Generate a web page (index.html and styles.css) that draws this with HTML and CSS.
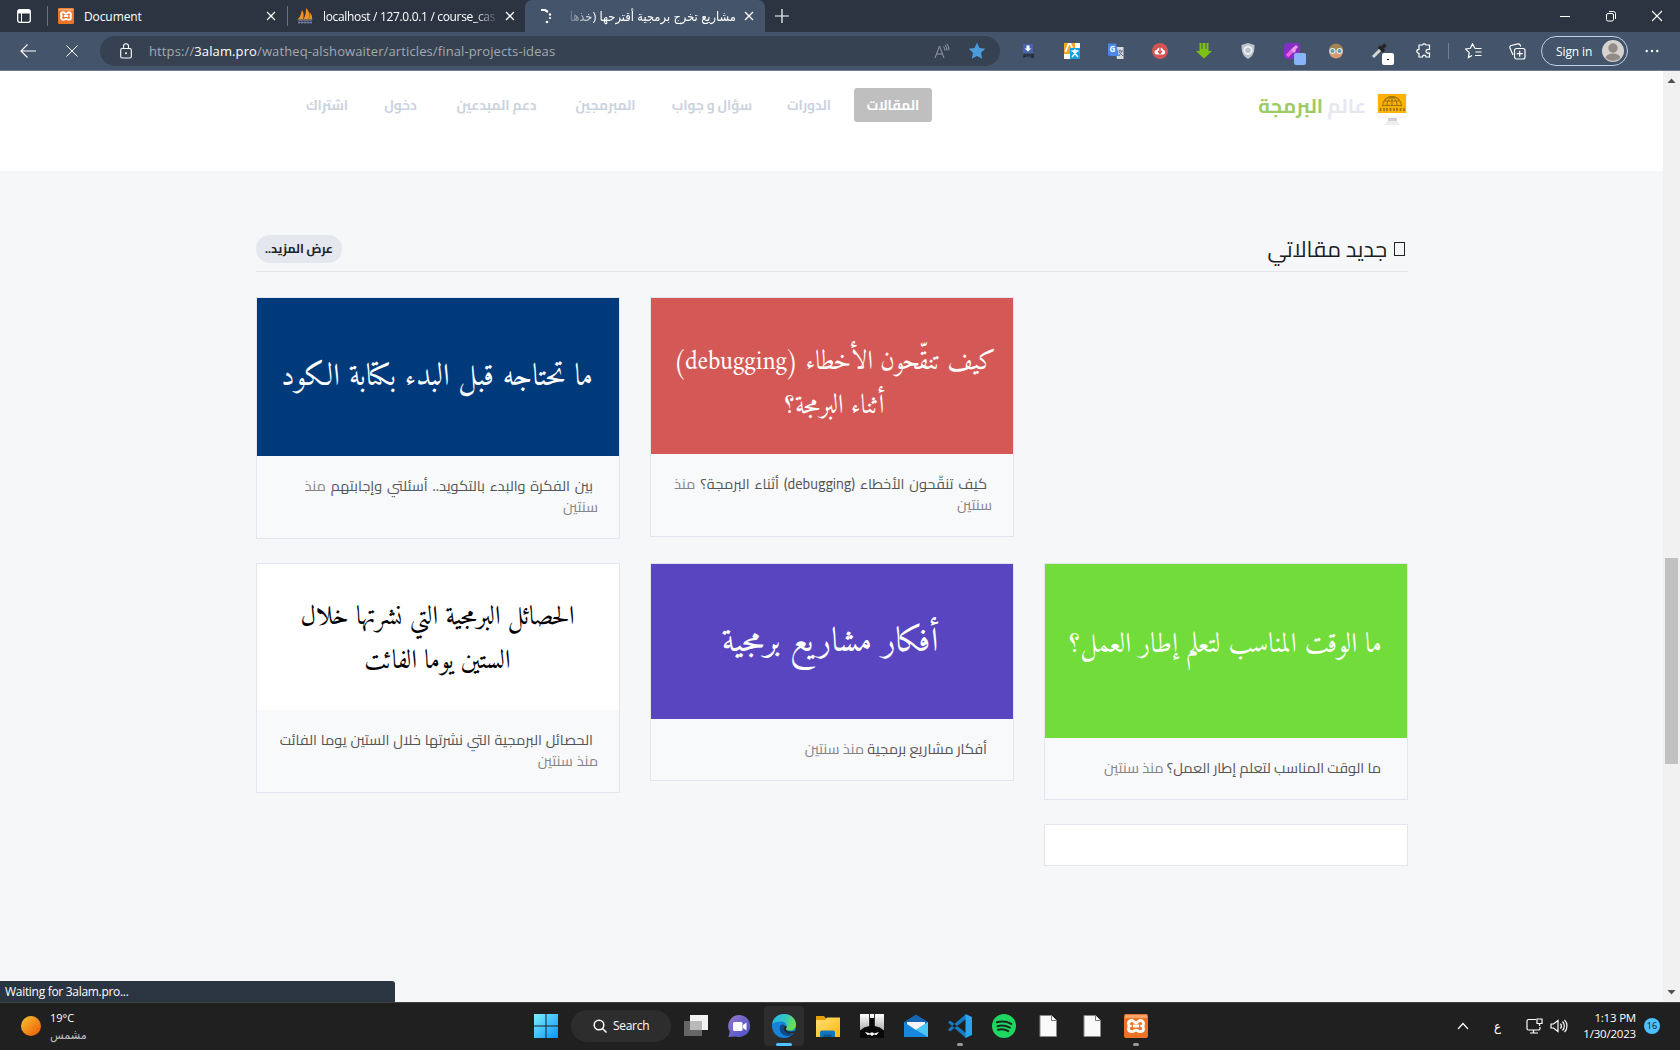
FILE: index.html
```html
<!DOCTYPE html>
<html lang="ar">
<head>
<meta charset="utf-8">
<title>مشاريع تخرج برمجية أقترحها</title>
<link rel="stylesheet" href="styles.css">
</head>
<body>
<svg class="defs" width="0" height="0">
  <defs>
    <symbol id="x" viewBox="0 0 12 12"><path d="M2 2l8 8M10 2l-8 8" stroke="#fff" stroke-width="1.3" fill="none"/></symbol>
    <symbol id="xampp" viewBox="0 0 24 24"><rect width="24" height="24" rx="2" fill="#ee7326"/><path d="M1 1h22v3H1z" fill="#f6a56d"/><path d="M8 6.500c-2.500 0-3.500 1.500-3.500 3.200 0 1.300.6 1.900 1.300 2.300-.8.500-1.300 1.200-1.300 2.400 0 2 1.500 3.200 3.500 3.200s2.600-1.300 4-1.300 2 1.300 4 1.300 3.500-1.300 3.500-3.200c0-1.200-.5-1.900-1.300-2.400.8-.4 1.300-1.100 1.300-2.300 0-1.900-1.300-3.200-3.500-3.200-2 0-1.800 2.300-4 2.300S10 6.500 8 6.500zM9 12h6" fill="none" stroke="#fff" stroke-width="2.900"/></symbol>
    <linearGradient id="gsun" x1="0" y1="0" x2="1" y2="1"><stop offset=".15" stop-color="#f4b42c"/><stop offset=".8" stop-color="#ef6c0d"/></linearGradient>
    <linearGradient id="gwin" x1="0" y1="0" x2="1" y2="1"><stop offset="0" stop-color="#7cf0ff"/><stop offset="1" stop-color="#0a93f8"/></linearGradient>
    <linearGradient id="gedge" x1="0" y1="0" x2="1" y2=".3"><stop offset="0" stop-color="#25b5e8"/><stop offset=".6" stop-color="#36c6c0"/><stop offset="1" stop-color="#6ae04c"/></linearGradient>
    <linearGradient id="gchat" x1="0" y1="0" x2="1" y2="1"><stop offset="0" stop-color="#9c79c4"/><stop offset=".5" stop-color="#6a63cc"/><stop offset="1" stop-color="#4a4fc4"/></linearGradient>
    <linearGradient id="gfold" x1="0" y1="0" x2="1" y2="1"><stop offset="0" stop-color="#ffdf74"/><stop offset="1" stop-color="#fdb90d"/></linearGradient>
    <linearGradient id="gbat" x1="0" y1="0" x2="0" y2="1"><stop offset="0" stop-color="#fff"/><stop offset="1" stop-color="#888"/></linearGradient>
  </defs>
</svg>

<div class="tabs">
  <div class="tab-menu"><svg width="14" height="14" viewBox="0 0 14 14"><rect x=".7" y=".7" width="12.600" height="12.600" rx="2" fill="none" stroke="#fff" stroke-width="1.300"/><path d="M1 1h12v3.500H1z" fill="#fff"/><path d="M4.500 4v9" stroke="#fff"/></svg></div>
  <div class="tab first"><svg width="16" height="16"><use href="#xampp"/></svg><span class="label">Document</span><svg width="12" height="12"><use href="#x"/></svg></div>
  <div class="tab second"><svg width="16" height="16" viewBox="0 0 16 16"><path d="M1 11C4 8 4 5 5 2c2 3 2 6 1 9zM6.500 11C9 7 9 4 9 0c4 4 4 8 2.500 11zM12 11c1-3 1-5 .5-7 2 2 3 5 2.500 7z" fill="#f39323"/><path d="M0 11.500h16l-2 1H2z" fill="#b7a691"/><path d="M1 14.500h14M2 13v3M5 13v3M8 13v3M11 13v3M14 13v3" stroke="#7179a0"/></svg><span class="label fade">localhost / 127.0.0.1 / course_cas</span><svg width="12" height="12"><use href="#x"/></svg></div>
  <div class="tab active"><svg width="16" height="16" viewBox="0 0 16 16"><path d="M3 2h4l3 2" fill="none" stroke="#fff" stroke-width="2.200"/><circle cx="12" cy="6.500" r="1.200" fill="#fff"/><circle cx="12" cy="10" r="1.100" fill="#fff"/><circle cx="9" cy="14" r="1.300" fill="#fff"/></svg><span class="label" dir="rtl">مشاريع تخرج برمجية أقترحها (خذها</span><svg width="12" height="12"><use href="#x"/></svg></div>
  <svg class="plus" width="14" height="14" viewBox="0 0 14 14"><path d="M7 0v14M0 7h14" stroke="#fff" stroke-width="1.200"/></svg>
  <div class="controls">
    <svg width="12" height="12" viewBox="0 0 12 12"><path d="M1 6.500h10" stroke="#fff"/></svg>
    <svg width="12" height="12" viewBox="0 0 12 12"><rect x="1.500" y="3.500" width="7" height="7.500" rx="1.500" fill="none" stroke="#fff"/><path d="M4 1.500h4.500a2 2 0 012 2V9" fill="none" stroke="#fff"/></svg>
    <svg width="12" height="12" viewBox="0 0 12 12"><path d="M1 1l10 10M11 1L1 11" stroke="#fff" stroke-width="1.100"/></svg>
  </div>
</div>

<div class="toolbar">
  <svg class="back" width="16" height="14" viewBox="0 0 16 14"><path d="M7.500.500L1 7l6.500 6.500M1 7h15" fill="none" stroke="#fff" stroke-width="1.100"/></svg>
  <svg class="stop" width="12" height="12" viewBox="0 0 12 12"><path d="M.5.500l11 11M11.500.500l-11 11" stroke="#fff"/></svg>
  <div class="address">
    <svg width="12" height="16" viewBox="0 0 12 16"><rect x=".7" y="5.500" width="10.600" height="9.500" rx="1.500" fill="none" stroke="#fff" stroke-width="1.100"/><path d="M3.500 5.500V3.300a2.500 2.500 0 015 0v2.200" fill="none" stroke="#fff" stroke-width="1.100"/><circle cx="6" cy="10.300" r="1" fill="#fff"/></svg>
    <span class="url">https://<b>3alam.pro</b>/watheq-alshowaiter/articles/final-projects-ideas</span>
    <svg width="16" height="16" viewBox="0 0 16 16"><path d="M1 15L5.500 3 10 15M2.500 11h6M9.500 3.500a5 5 0 011.500 4M11 2a7 7 0 012 5.500M12.800.800a9 9 0 012.200 6.500" fill="none" stroke="#929aa5"/></svg>
    <svg width="18" height="18" viewBox="0 0 18 18"><path d="M9 .8l2.500 5.300 5.800.7-4.300 4 1.200 5.900L9 13.900l-5.200 2.800L5 10.800l-4.300-4 5.800-.7z" fill="#4a9bda"/></svg>
  </div>
  <div class="extensions">
    <svg viewBox="0 0 16 16"><rect x="3" y="1" width="10" height="9" fill="#4464b0"/><path d="M8 8.500L4.500 5.500h2v-3h3v3h2z" fill="#fff"/><text x="3" y="14.300" font-size="6" font-weight="bold" fill="#161d29">png</text></svg>
    <svg viewBox="0 0 16 16"><path d="M0 0h16v16H0z" fill="#fff"/><path d="M0 0h11v5H6v6H0z" fill="#fba51c"/><path d="M1.500 9l3-8h2l2 5" fill="none" stroke="#fff" stroke-width="1.800"/><path d="M6 5h10v11H6z" fill="#16a1e6"/><path d="M7.500 8h7M11 6v2M9 8l5 6M13 8l-5 6" stroke="#fff" stroke-width="1.300"/></svg>
    <svg viewBox="0 0 16 16"><path d="M7 4h8.500v12H9z" fill="#d6dae0"/><path d="M0 .5h8L11 13H1.500L0 12z" fill="#4a86ec"/><text x="1.500" y="9.300" font-size="8" font-weight="bold" fill="#fff">G</text><path d="M9.500 8H15M12 6.500V8M14 8l-3 5M11 9l4 4" stroke="#6d7885"/></svg>
    <svg viewBox="0 0 16 16"><circle cx="8" cy="8" r="8" fill="#d25656"/><path d="M4.500 11.500a2.200 2.200 0 01.3-4.400 3.300 3.300 0 016.300-.3 2.400 2.400 0 01.4 4.700z" fill="#fff"/><path d="M8 4v6M6 8l2 2.500L10 8" fill="none" stroke="#cf4e4e" stroke-width="1.400"/></svg>
    <svg viewBox="0 0 16 16"><path d="M3.500 0h2v6h1V0h3v6h1V0h2v8H16l-8 7.500L0 8h3.500z" fill="#7cc212"/></svg>
    <svg viewBox="0 0 16 16"><path d="M8 0l6.500 2c0 7-1 11-6.500 14C2.500 13 1.500 9 1.500 2z" fill="#bcc3cb"/><circle cx="8" cy="7.300" r="3.700" fill="none" stroke="#eef1f3" stroke-width="1.800"/></svg>
    <svg viewBox="0 0 16 16"><rect width="16" height="16" rx="3" fill="#8430c8"/><path d="M3 13l8-8" stroke="#ed62d9" stroke-width="3.500"/><path d="M8 6l3 3M9 7l4-4" stroke="#ee9ce5" stroke-width="3"/><rect x="10" y="10" width="12" height="12" rx="2" fill="#8ab4f8"/></svg>
    <svg viewBox="0 0 16 16"><circle cx="8" cy="8.500" r="7" fill="#d99a72"/><path d="M1 7a7 6.500 0 0114 0z" fill="#a38555"/><circle cx="4.500" cy="8" r="2.500" fill="#5f9fae" stroke="#dfe9ea" stroke-width="1.100"/><circle cx="11.500" cy="8" r="2.500" fill="#5f9fae" stroke="#dfe9ea" stroke-width="1.100"/></svg>
    <svg viewBox="0 0 16 16"><path d="M1 14l8-8" stroke="#d6d6d3" stroke-width="3"/><path d="M7 3.500l5 5M9 6l4.500-4.500" stroke="#252525" stroke-width="3.500"/><rect x="10" y="10" width="12" height="12" rx="2" fill="#fff"/><path d="M15 16.500h2" stroke="#111"/></svg>
    <svg viewBox="0 0 16 16"><path d="M4 2h2.500a2 2 0 013.500 0h3.500v4.500c-2-.5-3.500.3-3.500 1.800s1.500 2.200 3.500 1.700V14H10c0-1.300-.8-1.800-1.800-1.800S6.500 13 6.500 14H3v-3.700C1.500 10.200.8 9.500.8 8.300S1.600 6.400 3 6.300V2z" fill="none" stroke="#fff" stroke-width="1.200"/></svg>
  </div>
  <i class="bar"></i>
  <svg class="fav" width="17" height="16" viewBox="0 0 17 16"><path d="M10 5.500L7.500.8 5.400 5.300.5 6l3.700 3.600-.8 5L7 12.500M10 5.500h6.500M10.500 9h6M10 12.500h6.500" fill="none" stroke="#fff" stroke-width="1.200"/></svg>
  <svg class="coll" width="17" height="17" viewBox="0 0 17 17"><rect x="5.500" y="5.500" width="10.500" height="10.500" rx="2" fill="none" stroke="#fff" stroke-width="1.200"/><path d="M10.700 7.700v6M7.700 10.700h6M4 12L1 5a2 2 0 011-2.500L9 .8a2 2 0 012 1l.7 1.700" fill="none" stroke="#fff" stroke-width="1.200"/></svg>
  <div class="signin"><span>Sign in</span><svg width="22" height="22" viewBox="0 0 22 22"><circle cx="11" cy="11" r="11" fill="#d5d2cf"/><circle cx="11" cy="8" r="4.700" fill="#918c87"/><path d="M3.500 18a7.600 5.500 0 0115 0 11 11 0 01-15 0z" fill="#918c87"/></svg></div>
  <svg class="more" width="14" height="4" viewBox="0 0 14 4"><g fill="#fff"><circle cx="1.700" cy="2" r="1.200"/><circle cx="7" cy="2" r="1.200"/><circle cx="12.300" cy="2" r="1.200"/></g></svg>
</div>

<div class="window">
  <div class="page">
    <header class="site-header">
      <nav dir="rtl">
        <a class="current">المقالات</a><a>الدورات</a><a>سؤال و جواب</a><a>المبرمجين</a><a>دعم المبدعين</a><a>دخول</a><a>اشتراك</a>
      </nav>
      <div class="logo" dir="rtl">
        <svg width="32" height="33" viewBox="0 0 32 33"><path d="M1 0h30v25H1z" fill="#f3f3f3"/><path d="M2 1h28v19H2z" fill="#ffb100"/><path d="M6.500 13.500a9 9.500 0 0119 0M7 12.500h18M8 8h16M16 4v9M11 13c0-4 2-8 5-9 3 1 5 5 5 9" fill="none" stroke="#9c7414" stroke-width="1.200"/><path d="M4.500 15v4M8 15v4M11 15v4M14.500 15v4M18 15v4M21 15v4M24.500 15v4M28 15v4" stroke="#9c7414" stroke-width="1.700" stroke-dasharray="3 1"/><path d="M2 20h28v4H2z" fill="#fff"/><path d="M12 25h9v4h-9z" fill="#d1d1d1"/><path d="M12 28h9l3 4H8z" fill="#ededed"/></svg>
        <span class="w1">عالم</span><span class="w2">البرمجة</span>
      </div>
    </header>
    <section class="articles">
      <div class="heading" dir="rtl"><h2><i class="glyph-box"></i>جديد مقالاتي</h2><a class="view-more">عرض المزيد..</a></div>
      <div class="cards">
        <article class="card c1">
          <svg class="cover blue" height="158" viewBox="0 0 362 158"><text x="180" y="87" font-size="31" textLength="312" lengthAdjust="spacingAndGlyphs">ما تحتاجه قبل البدء بكتابة الكود</text></svg>
          <p class="wide" dir="rtl"><a>بين الفكرة والبدء بالتكويد.. أسئلتي وإجابتهم</a> منذ<br>سنتين</p>
        </article>
        <article class="card c2">
          <svg class="cover red" height="156" viewBox="0 0 362 156"><text x="183.500" y="71" font-size="27" textLength="322" lengthAdjust="spacingAndGlyphs">كيف تنقّحون الأخطاء (debugging)</text><text x="183.500" y="115" font-size="27" textLength="100" lengthAdjust="spacingAndGlyphs">أثناء البرمجة؟</text></svg>
          <p class="wide" dir="rtl"><a>كيف تنقّحون الأخطاء (debugging) أثناء البرمجة؟</a> منذ<br>سنتين</p>
        </article>
        <article class="card c1">
          <svg class="cover white" height="146" viewBox="0 0 362 146"><text x="180.500" y="60" font-size="26.500" textLength="274" lengthAdjust="spacingAndGlyphs">الحصائل البرمجية التي نشرتها خلال</text><text x="180.500" y="104" font-size="26.500" textLength="146" lengthAdjust="spacingAndGlyphs">الستين يوما الفائت</text></svg>
          <p class="loose" dir="rtl"><a>الحصائل البرمجية التي نشرتها خلال الستين يوما الفائت</a><br>منذ سنتين</p>
        </article>
        <article class="card c2">
          <svg class="cover purple" height="155" viewBox="0 0 362 155"><text x="179" y="87" font-size="34" textLength="217" lengthAdjust="spacingAndGlyphs">أفكار مشاريع برمجية</text></svg>
          <p dir="rtl"><a>أفكار مشاريع برمجية</a> منذ سنتين</p>
        </article>
        <article class="card c3">
          <svg class="cover green" height="174" viewBox="0 0 362 174"><text x="180.500" y="88" font-size="28" textLength="313" lengthAdjust="spacingAndGlyphs">ما الوقت المناسب لتعلم إطار العمل؟</text></svg>
          <p dir="rtl"><a>ما الوقت المناسب لتعلم إطار العمل؟</a> منذ سنتين</p>
        </article>
        <article class="card c3 empty"></article>
      </div>
    </section>
  </div>
  <div class="scrollbar">
    <svg width="9" height="5" viewBox="0 0 9 5"><path d="M.5 5h8l-4-4.500z" fill="#505050"/></svg>
    <i class="thumb"></i>
    <svg width="9" height="5" viewBox="0 0 9 5"><path d="M.5 0h8l-4 4.500z" fill="#505050"/></svg>
  </div>
  <div class="status">Waiting for 3alam.pro...</div>
</div>

<div class="taskbar">
  <div class="weather"><svg width="20" height="20"><circle cx="10" cy="10" r="10" fill="url(#gsun)"/></svg><div><span>19°C</span><span class="cond">مشمس</span></div></div>
  <div class="apps">
    <svg class="win" width="24" height="24" viewBox="0 0 24 24"><path d="M0 0h11.500v11.500H0zM12.500 0H24v11.500H12.500zM0 12.500h11.500V24H0zM12.500 12.500H24V24H12.500z" fill="url(#gwin)"/></svg>
    <div class="search"><svg width="14" height="14" viewBox="0 0 14 14"><circle cx="6" cy="6" r="4.800" fill="none" stroke="#fff" stroke-width="1.500"/><path d="M9.500 9.500l4 4" stroke="#fff" stroke-width="1.500"/></svg>Search</div>
    <div class="app"><svg viewBox="0 0 24 24"><path d="M6 1h18v15H6z" fill="#f2f2f2"/><path d="M0 7h18v15H0z" fill="#666"/><path d="M6 7h12v9H6z" fill="#b9b9b9"/></svg></div>
    <div class="app"><svg viewBox="0 0 24 24"><path d="M12 1a11 11 0 11-4 21.500L.5 23l1.200-5.500A11 11 0 0112 1z" fill="url(#gchat)"/><rect x="5" y="8" width="9.500" height="9" rx="1.500" fill="#fff"/><path d="M15 11l3.500-2.500v8L15 14z" fill="#fff"/></svg></div>
    <div class="app on"><svg viewBox="0 0 24 24"><circle cx="12" cy="12" r="12" fill="#1583da"/><path d="M.2 10C1 4 6 0 12 0c7 0 12 5 12 10.500 0 4-3 6-6.500 6-3 0-4.500-1.200-3.500-2.500 1.500-2 .5-6.500-5-6.500C5 7.500 2 8.500.2 10z" fill="url(#gedge)"/><path d="M8 12c-1.500 5 2 10 8 10 2 0 4-.5 5.500-2-3 .5-7.500-.3-9-3.500-.8-1.700-.5-3 .5-4.500-1-2-4-2-5 0z" fill="#114a8b"/><path d="M12.500 12c-1.300 2-.8 3.600 0 5 2 3 7 3.500 9.800 2l.7-2c-3 1-9 .5-9-2 0-1 1-1.500.5-3z" fill="#202830"/></svg></div>
    <div class="app"><svg viewBox="0 0 24 24"><path d="M0 2h8l2 2.500V8H0z" fill="#e2a00a"/><path d="M0 6h9l2-2.500h13V23H0z" fill="url(#gfold)"/><path d="M4 23v-4.500a2 2 0 012-2h11a2 2 0 012 2V23z" fill="#1673bd"/><path d="M7.500 20.500h8V23h-8z" fill="#0c5591"/></svg></div>
    <div class="app"><svg viewBox="0 0 24 24"><path d="M0 0h24v24H0z" fill="url(#gbat)"/><path d="M9.500 4v-4M14.500 4v-4" stroke="#333"/><path d="M9.200 4h5.600v8l5 1.500 4.200 3V24H0v-7.500l4.200-3 5-1.500z" fill="#080808"/><path d="M5 18l4 1 1 .5.800-1h2.400l.8 1L19 18l-2.500 3-2.500-.5-2 1.500-2-1.500-2.500.5z" fill="#fff"/></svg></div>
    <div class="app"><svg viewBox="0 0 24 24"><path d="M0 8l12-7.500L24 8v6H0z" fill="#1665b0"/><path d="M3 8h18v8H3z" fill="#f2f4f5"/><path d="M0 8l12 8L24 8v15H0z" fill="#1687dc"/><path d="M24 8v15L12 16z" fill="#4ac7f4"/></svg></div>
    <div class="app dot"><svg viewBox="0 0 24 24"><path d="M0 8.500l2-2L18 19v5zM0 15.500l2 2L18 5V0z" fill="#147cc2"/><path d="M17.500 0L24 3v18l-6.500 3z" fill="#2ba4f0"/></svg></div>
    <div class="app"><svg viewBox="0 0 24 24"><circle cx="12" cy="12" r="12" fill="#1ed760"/><path d="M4.800 8.300c5-1.300 10.300-.8 14.500 1.600M5.500 12.200c4.200-1.200 8.500-.7 12.300 1.500M6 15.800c3.700-.9 7.200-.5 10.300 1.300" fill="none" stroke="#1c2b21" stroke-width="2" stroke-linecap="round"/></svg></div>
    <div class="app"><svg viewBox="0 0 24 24"><path d="M4 1.500h11.500l5 5v16H4z" fill="#fafafa" stroke="#8a8a8a"/><path d="M15.500 1.500v5h5" fill="#fff" stroke="#777"/></svg></div>
    <div class="app"><svg viewBox="0 0 24 24"><path d="M4 1.500h11.500l5 5v16H4z" fill="#fafafa" stroke="#8a8a8a"/><path d="M15.500 1.500v5h5" fill="#fff" stroke="#777"/></svg></div>
    <div class="app dot"><svg viewBox="0 0 24 24"><use href="#xampp"/></svg></div>
  </div>
  <div class="tray">
    <svg width="12" height="8" viewBox="0 0 12 8"><path d="M1 7l5-5.500L11 7" fill="none" stroke="#fff" stroke-width="1.200"/></svg>
    <span class="lang">ع</span>
    <svg class="net" width="17" height="16" viewBox="0 0 17 16"><path d="M10 1.500H2.500a1.500 1.500 0 00-1.500 1.500v7.500A1.500 1.500 0 002.500 12h10a1.500 1.500 0 001.500-1.500V9M4 15h8M7.500 12v3M11 1h5v4.500h-5zM13.500 5.500V8" fill="none" stroke="#fff" stroke-width="1.200"/></svg>
    <svg width="18" height="14" viewBox="0 0 18 14"><path d="M1 5h2.500L8 1.500v11L3.500 9H1zM10.500 4.500a4 4 0 010 5M12.500 2.500a6.500 6.500 0 010 9M14.500.800a9 9 0 010 12.400" fill="none" stroke="#fff" stroke-width="1.200"/></svg>
    <div class="clock"><span>1:13 PM</span><span>1/30/2023</span></div>
    <span class="badge">16</span>
  </div>
</div>
</body>
</html>
```

FILE: styles.css
```css
* { box-sizing: border-box; }
body { margin: 0; width: 1680px; height: 1050px; overflow: hidden; display: flex; flex-direction: column; font-family: "Open Sans", "DejaVu Sans Condensed", "DejaVu Sans", sans-serif; font-size: 12px; color: #fff; }
svg { display: block; flex: none; }
.defs { position: absolute; }

/* Tab strip */
.tabs { height: 32px; background: #2b3440; display: flex; align-items: center; flex: none; }
.tab-menu { width: 47px; padding-left: 17px; }
.tab { height: 32px; display: flex; align-items: center; }
.tab .label { white-space: nowrap; flex: 1; letter-spacing: -.1px; }
.first { width: 240px; padding: 0 10px 0 11px; background: linear-gradient(#6b727c, #6b727c) 0 50% / 1px 20px no-repeat; }
.first .label, .second .label { margin-left: 10px; }
.second { width: 238px; padding: 0 9px 0 10px; background: linear-gradient(#6b727c, #6b727c) 0 50% / 1px 20px no-repeat; }
.second .label { margin-right: 3px; letter-spacing: -.33px; width: 178px; flex: none; }
.fade { -webkit-mask-image: linear-gradient(90deg, #000 85%, transparent 99%); mask-image: linear-gradient(90deg, #000 85%, transparent 99%); }
.active { width: 240px; padding: 0 10px 0 13px; background: #44546a; border-radius: 7px 7px 0 0; }
.active .label { margin: 0 7px 0 8px; font-size: 12.800px; letter-spacing: 0; -webkit-mask-image: linear-gradient(270deg, #000 80%, transparent); mask-image: linear-gradient(270deg, #000 80%, transparent); }
.plus { margin-left: 10px; }
.controls { margin-left: auto; margin-right: 17px; display: flex; gap: 34px; }

/* Toolbar */
.toolbar { height: 39px; background: #44546a; border-bottom: 1px solid #6f7b91; display: flex; align-items: center; flex: none; }
.back { margin-left: 20px; }
.stop { margin-left: 30px; }
.address { width: 900px; height: 30px; margin-left: 22px; padding: 0 14px 0 20px; border-radius: 15px; background: #364252; display: flex; align-items: center; gap: 18px; }
.url { flex: 1; margin-left: -1px; font-size: 13px; letter-spacing: .115px; color: #a3a9b1; white-space: nowrap; }
.url b { font-weight: 400; color: #fff; }
.extensions { display: flex; gap: 28px; margin-left: 20px; }
.extensions svg { width: 16px; height: 16px; overflow: visible; }
.bar { width: 1px; height: 16px; background: #728096; margin-left: 16px; }
.fav { margin-left: 16px; }
.coll { margin-left: 27px; }
.signin { width: 87px; height: 30px; margin-left: 15px; border: 1px solid #bdd0ec; border-radius: 15px; display: flex; align-items: center; justify-content: space-between; padding: 0 3px 0 14px; letter-spacing: -.1px; }
.more { margin-left: 17px; }

/* Page */
.window { position: relative; flex: 1; display: flex; min-height: 0; }
.page { flex: 1; background: #f6f7f9; font-family: "Cairo", "DejaVu Sans Condensed", "DejaVu Sans", sans-serif; }
.site-header { height: 100px; background: #fff; padding: 17px 255px 0 289px; display: flex; justify-content: space-between; align-items: flex-start; }
nav { display: grid; grid-template-columns: 84px 78px 116px 97px 121px 71px 76px; direction: rtl; }
nav a { height: 34px; line-height: 35px; text-align: center; color: #cbd3de; font-weight: 700; font-size: 13.600px; white-space: nowrap; }
nav .current { margin-left: 6px; background: #bfbfbf; color: #fff; border-radius: 3px; }
.logo { display: flex; align-items: flex-start; padding-top: 5px; font-size: 20px; line-height: 26px; white-space: nowrap; }
.w1 { margin-right: 10px; width: 38px; color: #e5e8ef; font-weight: 700; }
.w2 { margin-right: 5px; width: 64px; color: #9ecb65; font-weight: 700; }
.articles { width: 1152px; margin-left: 256px; padding-top: 57px; }
.heading { height: 44px; border-bottom: 1px solid #e3e5e9; display: flex; justify-content: space-between; align-items: flex-start; padding-top: 7px; }
h2 { margin: 0; font-size: 21.800px; font-weight: 400; line-height: 28px; color: #1d1d1d; display: flex; align-items: center; }
.glyph-box { width: 11px; height: 14px; border: 1px solid #222; margin: 0 3px 0 7px; }
.view-more { width: 86px; height: 28px; line-height: 27px; text-align: center; border-radius: 14px; background: #e4e7ee; color: #222; font-size: 12.300px; font-weight: 700; white-space: nowrap; }
.cards { display: grid; grid-template-columns: repeat(3, 364px); gap: 24px 30px; align-items: start; margin-top: 25px; }
.c1 { grid-column: 1; }
.c2 { grid-column: 2; }
.c3 { grid-column: 3; }
.card { border: 1px solid #e3e6ee; background: #f8f9fb; }
.card p { margin: 0; padding: 19px 21px 21px; font-size: 14.500px; line-height: 21px; color: #858585; white-space: nowrap; }
.card p a { color: #555; padding-right: 5px; }
.card .wide { word-spacing: 1.700px; }
.card .loose { word-spacing: .700px; }
.cover { width: 362px; }
.cover text { font-family: "Amiri", "Noto Naskh Arabic", "Liberation Serif", "DejaVu Sans Condensed", serif; direction: rtl; text-anchor: middle; fill: #fff; }
.blue { background: #003a7b; }
.red { background: #d45956; }
.white { background: #fff; }
.cover.white text { fill: #000; }
.purple { background: #5845bf; }
.green { background: #72dc3b; }
.empty { height: 42px; background: #fff; }
.scrollbar { width: 17px; background: #f1f1f1; display: flex; flex-direction: column; align-items: center; padding: 7px 0; }
.thumb { width: 13px; height: 206px; background: #c1c1c1; margin: 475px 0 auto; }
.status { position: absolute; left: 0; bottom: 0; width: 395px; height: 21px; padding-left: 5px; line-height: 21px; background: #2b3441; border-radius: 0 3px 0 0; letter-spacing: -.3px; }

/* Taskbar */
.taskbar { height: 48px; background: #202020; border-top: 1px solid #414141; display: flex; align-items: center; flex: none; font-size: 11px; padding-bottom: 2px; }
.weather { display: flex; align-items: center; width: 534px; padding-left: 21px; gap: 9px; }
.weather span { display: block; line-height: 17px; }
.weather .cond { color: #bbb; font-size: 12.500px; }
.apps { display: flex; align-items: center; }
.search { width: 100px; height: 32px; margin: 0 11px 0 13px; border-radius: 16px; background: #2d2d2d; display: flex; align-items: center; padding-left: 22px; gap: 6px; font-size: 12px; letter-spacing: -.3px; }
.app { position: relative; width: 40px; height: 40px; margin-right: 4px; padding: 8px; border-radius: 4px; }
.search + .app { margin-left: -6px; }
.app svg { width: 24px; height: 24px; }
.on { background: #2d2d2d; }
.on::after, .dot::after { content: ""; position: absolute; bottom: 0; left: 12px; width: 16px; height: 3px; border-radius: 2px; background: #4cc2ff; }
.dot::after { left: 17px; width: 6px; background: #999; }
.tray { margin-left: auto; padding-right: 20px; display: flex; align-items: center; }
.lang { width: 8px; margin: 0 24px 0 25px; font-size: 13px; }
.net { margin-right: 7px; }
.clock { width: 68px; text-align: right; font-size: 11.500px; letter-spacing: -.2px; }
.clock span { display: block; line-height: 16px; }
.badge { width: 16px; height: 16px; margin-left: 8px; border-radius: 8px; background: #4cc2ff; color: #111; font-size: 9px; line-height: 16px; text-align: center; }
```
